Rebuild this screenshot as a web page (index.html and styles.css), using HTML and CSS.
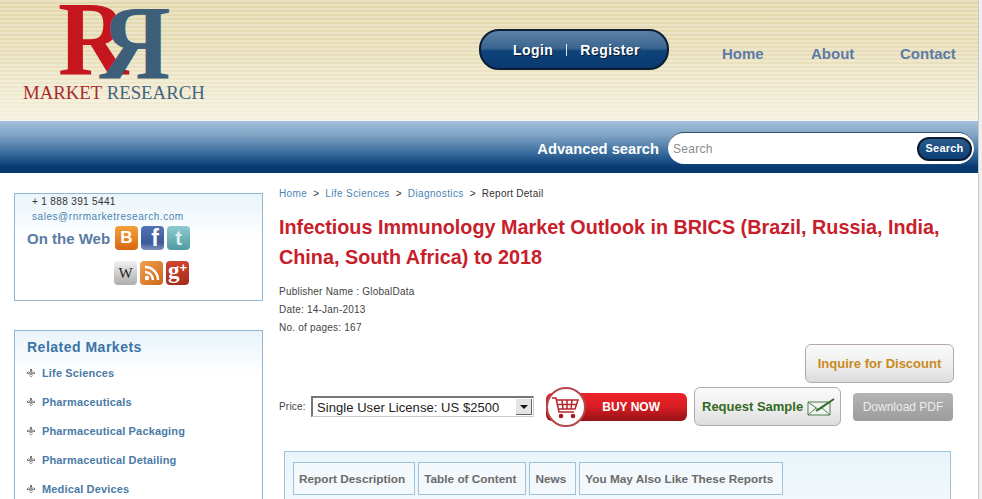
FILE: index.html
```html
<!DOCTYPE html>
<html lang="en">
<head>
    <meta charset="UTF-8">
    <title>Infectious Immunology Market Outlook in BRICS</title>
    <link rel="stylesheet" href="styles.css">
</head>
<body>
    <div class="page">
        <header class="header">
            <a class="logo" href="#">
                <span class="logo-r">R</span>
                <span class="logo-r-flip">R</span>
                <span class="logo-name"><span class="red">MARKET</span> RESEARCH</span>
            </a>
            <div class="login-pill"><a href="#">Login</a><i></i><a href="#">Register</a></div>
            <nav class="nav">
                <a href="#">Home</a>
                <a href="#">About</a>
                <a href="#">Contact</a>
            </nav>
        </header>
        <div class="search-band">
            <a class="adv-search" href="#">Advanced search</a>
            <div class="search-box">
                <span class="search-hint">Search</span>
                <span class="search-btn">Search</span>
            </div>
        </div>
        <div class="content">
            <aside class="sidebar">
                <div class="side-box contact-box">
                    <div class="phone">+ 1 888 391 5441</div>
                    <a class="mail" href="#">sales@rnrmarketresearch.com</a>
                    <div class="web-row">
                        <span class="web-title">On the Web</span>
                        <span class="soc blogger">B</span>
                        <span class="soc facebook">f</span>
                        <span class="soc twitter">t</span>
                    </div>
                    <div class="web-row second">
                        <span class="soc wiki">W</span>
                        <span class="soc rss">
                            <svg width="16" height="16" viewBox="0 0 16 16"><circle cx="3" cy="13" r="2.2" fill="#fff"/><path d="M1 7a8 8 0 0 1 8 8M1 2a13 13 0 0 1 13 13" fill="none" stroke="#fff" stroke-width="2.4"/></svg>
                        </span>
                        <span class="soc gplus">g<sup>+</sup></span>
                    </div>
                </div>
                <div class="side-box markets">
                    <h3>Related Markets</h3>
                    <ul>
                        <li><a href="#">Life Sciences</a></li>
                        <li><a href="#">Pharmaceuticals</a></li>
                        <li><a href="#">Pharmaceutical Packaging</a></li>
                        <li><a href="#">Pharmaceutical Detailing</a></li>
                        <li><a href="#">Medical Devices</a></li>
                    </ul>
                </div>
            </aside>
            <main class="main">
                <div class="crumbs">
                    <a href="#">Home</a><b>&gt;</b><a href="#">Life Sciences</a><b>&gt;</b><a href="#">Diagnostics</a><b>&gt;</b><span>Report Detail</span>
                </div>
                <h1>Infectious Immunology Market Outlook in BRICS (Brazil, Russia, India, China, South Africa) to 2018</h1>
                <div class="meta-list">
                    <div class="meta">Publisher Name : GlobalData</div>
                    <div class="meta">Date: 14-Jan-2013</div>
                    <div class="meta">No. of pages: 167</div>
                </div>
                <div class="discount-row">
                    <a class="soft-btn discount" href="#">Inquire for Discount</a>
                </div>
                <div class="buy-row">
                    <span class="price-label">Price:</span>
                    <div class="fake-select">
                        <span>Single User License: US $2500</span>
                        <i class="arrow"></i>
                    </div>
                    <a class="buy-btn" href="#">
                        <span class="cart">
                            <svg width="30" height="26" viewBox="0 0 30 26">
                                <path d="M1 4h4l3 14h15M6 6h21l-3 9H8M11 6l1 9M16 6v9M21 6l-1 9M7 10.500h19" fill="none" stroke="#b5262c" stroke-width="1.500"/>
                                <circle cx="10" cy="22" r="2.300" fill="#a3191f"/>
                                <circle cx="22" cy="22" r="2.300" fill="#a3191f"/>
                            </svg>
                        </span>
                        <span class="buy-text">BUY NOW</span>
                    </a>
                    <a class="soft-btn sample" href="#">Request Sample
                        <svg width="28" height="18" viewBox="0 0 28 18">
                            <path d="M1 4h22v13H1zM1 4l11 8 11-8M1 17l8-7M23 17l-8-7" fill="#f1f4ee" stroke="#4f7a4f" stroke-width="1"/>
                            <path d="M9 13L27 1" stroke="#2f6b2a" stroke-width="2"/>
                        </svg>
                    </a>
                    <a class="pdf-btn" href="#">Download PDF</a>
                </div>
                <div class="tabs-box">
                    <a class="tab" href="#">Report Description</a>
                    <a class="tab" href="#">Table of Content</a>
                    <a class="tab" href="#">News</a>
                    <a class="tab" href="#">You May Also Like These Reports</a>
                </div>
            </main>
        </div>
    </div>
</body>
</html>
```

FILE: styles.css
```css
html, body {
    margin: 0;
    padding: 0;
    height: 499px;
    overflow: hidden;
    background-color: #fff;
}
body {
    font-family: "Liberation Sans", Arial, sans-serif;
}
a {
    text-decoration: none;
}
.page {
    width: 978px;
    height: 499px;
    overflow: hidden;
    background-color: #fff;
    border-right: 1px solid #c9c9c9;
    box-shadow: 3px 0 0 #eeeeee;
}

/* header */
.header {
    display: flex;
    height: 121px;
    background-color: #f3eed6;
    background-image:
        repeating-linear-gradient(180deg, rgba(255, 255, 255, 0.28) 0, rgba(255, 255, 255, 0.28) 2px, rgba(255, 255, 255, 0) 2px, rgba(255, 255, 255, 0) 4px),
        linear-gradient(180deg, #e2d7ab 0%, #e6dcb5 40%, #f0ead0 80%, #f5f1dd 100%);
}
.logo {
    position: relative;
    display: block;
    width: 479px;
    flex: none;
    font-family: "Liberation Serif", serif;
}
.logo-r, .logo-r-flip {
    position: absolute;
    font-size: 106px;
    font-weight: bold;
    line-height: 72px;
}
.logo-r {
    left: 58px;
    top: 3px;
    color: #c4161c;
    transform: scaleX(0.92);
    transform-origin: left center;
}
.logo-r-flip {
    left: 97px;
    top: 7px;
    color: #3d5f7a;
    transform: scaleX(-0.92);
}
.logo-name {
    position: absolute;
    left: 23px;
    top: 82px;
    font-size: 18.800px;
    line-height: 22px;
    color: #44657f;
    white-space: nowrap;
}
.logo-name .red {
    color: #a92a2d;
}
.login-pill {
    display: flex;
    align-items: center;
    justify-content: center;
    gap: 13px;
    box-sizing: border-box;
    width: 190px;
    height: 41px;
    margin-top: 29px;
    padding-left: 5px;
    border: 2px solid #0b1c33;
    border-radius: 20px;
    background: linear-gradient(180deg, #5a80a6 0%, #3c6690 46%, #0e4379 54%, #0a3a70 100%);
}
.login-pill a {
    color: #fff;
    font-size: 14px;
    font-weight: bold;
    letter-spacing: 0.45px;
    text-shadow: 1px 1px 0 #0b1c33;
}
.login-pill i {
    width: 1px;
    height: 12px;
    background-color: #dfe6ee;
}
.nav {
    display: flex;
    margin-left: 53px;
    padding-top: 45px;
}
.nav a {
    color: #5c7aa6;
    font-size: 15px;
    font-weight: bold;
    line-height: 18px;
    height: 18px;
}
.nav a:nth-child(1) {
    width: 89px;
}
.nav a:nth-child(2) {
    width: 89px;
}

/* search band */
.search-band {
    display: flex;
    align-items: center;
    justify-content: flex-end;
    gap: 9px;
    box-sizing: border-box;
    height: 52px;
    padding: 2px 4px 0 0;
    border-top: 2px solid #a3bbdd;
    background: linear-gradient(180deg, #9dbcd6 0%, #7ea3c4 25%, #2f6396 65%, #083a72 88%, #08376c 100%);
}
.adv-search {
    color: #fff;
    font-size: 14.700px;
    font-weight: bold;
}
.search-box {
    display: flex;
    align-items: center;
    justify-content: space-between;
    box-sizing: border-box;
    width: 306px;
    height: 32px;
    margin-bottom: 2px;
    padding: 0 2px 0 5px;
    background-color: #fff;
    border-radius: 16px;
    border-top: 1px solid #35506b;
}
.search-hint {
    color: #8a8a8a;
    font-size: 12px;
    letter-spacing: 0.3px;
}
.search-btn {
    box-sizing: border-box;
    width: 55px;
    height: 24px;
    line-height: 19px;
    text-align: center;
    color: #fff;
    font-size: 11px;
    font-weight: bold;
    letter-spacing: 0.2px;
    border: 2px solid #0c1d33;
    border-radius: 12px;
    background: linear-gradient(180deg, #2c5a8c 0%, #0b3f76 100%);
}

/* two columns */
.content {
    display: flex;
    padding: 14px 0 0 14px;
}
.sidebar {
    flex: none;
    width: 249px;
    margin-top: 6px;
}
.side-box {
    box-sizing: border-box;
    border: 1px solid #8fb6d3;
    background: linear-gradient(180deg, #e9f4fa 0%, #fff 45px);
}
.contact-box {
    height: 108px;
    padding: 1px 0 0 12px;
    margin-bottom: 29px;
}
.phone {
    margin-left: 5px;
    color: #333;
    font-size: 10px;
    letter-spacing: 0.35px;
    line-height: 13px;
}
.mail {
    display: block;
    margin: 2px 0 0 5px;
    color: #4a83b3;
    font-size: 10px;
    letter-spacing: 0.55px;
    line-height: 13px;
}
.web-row {
    display: flex;
    align-items: center;
    gap: 3px;
    margin-top: 3px;
}
.web-row.second {
    margin: 11px 0 0 87px;
}
.web-title {
    width: 84px;
    margin-right: 1px;
    color: #5a7ba3;
    font-size: 15px;
    font-weight: bold;
    white-space: nowrap;
}
.soc {
    display: flex;
    align-items: center;
    justify-content: center;
    flex: none;
    width: 23px;
    height: 24px;
    border-radius: 4px;
    color: #fff;
    font-weight: bold;
}
.blogger {
    font-size: 17px;
    background: linear-gradient(180deg, #f5a13c, #d9660f);
}
.facebook {
    align-items: flex-end;
    justify-content: flex-end;
    padding-right: 5px;
    box-sizing: border-box;
    font-size: 23px;
    line-height: 23px;
    background: linear-gradient(180deg, #5273b5, #3c5a99 70%, #7f92ba);
}
.twitter {
    font-size: 20px;
    line-height: 22px;
    color: #dff3f7;
    background: linear-gradient(180deg, #8fc9cf, #4f9ba0);
}
.wiki {
    font-family: "Liberation Serif", serif;
    font-size: 15px;
    font-weight: normal;
    color: #222;
    background: linear-gradient(180deg, #f1f1f1, #adadad);
}
.rss {
    background: linear-gradient(135deg, #f0a050, #cf6617);
}
.gplus {
    align-items: flex-start;
    font-family: "Liberation Serif", serif;
    font-size: 23px;
    line-height: 20px;
    background: linear-gradient(180deg, #d0442f, #a62b1c);
}
.gplus sup {
    font-family: "Liberation Sans", Arial, sans-serif;
    font-size: 13px;
    line-height: 13px;
    vertical-align: baseline;
}
.markets {
    height: 200px;
    padding: 8px 0 0 12px;
}
.markets h3 {
    margin: 0 0 3px;
    color: #3b74a8;
    font-size: 14px;
    font-weight: bold;
    line-height: 17px;
    letter-spacing: 0.5px;
}
.markets ul {
    margin: 0;
    padding: 0;
    list-style: none;
}
.markets li {
    display: flex;
    align-items: center;
    height: 29px;
    margin-top: -1px;
    margin-bottom: 1px;
}
.markets li::before {
    content: "";
    box-sizing: border-box;
    width: 6px;
    height: 6px;
    margin: 0 8px 0 1px;
    border: 1px dotted #777;
    background-color: #999;
    background-clip: content-box;
    transform: rotate(45deg);
}
.markets a {
    color: #4a7aa6;
    font-size: 11px;
    font-weight: bold;
    letter-spacing: 0.15px;
}

/* main column */
.main {
    flex: none;
    width: 675px;
    margin-left: 16px;
}
.crumbs {
    display: flex;
    color: #333;
    font-size: 10px;
    line-height: 13px;
    letter-spacing: 0.25px;
}
.crumbs a {
    color: #4a83b3;
    letter-spacing: 0.38px;
}
.crumbs b {
    margin: 0 6px;
    font-weight: normal;
}
h1 {
    margin: 12px 0 0;
    width: 670px;
    color: #c8202b;
    font-size: 19.800px;
    font-weight: bold;
    line-height: 30px;
}
.meta-list {
    margin-top: 11px;
}
.meta {
    color: #444;
    font-size: 10px;
    line-height: 18px;
    letter-spacing: 0.22px;
}
.soft-btn {
    display: flex;
    align-items: center;
    box-sizing: border-box;
    height: 39px;
    border: 1px solid #b5a9a9;
    border-radius: 6px;
    background: linear-gradient(180deg, #fafafa 0%, #eeeeee 55%, #dcdcdc 100%);
    font-size: 13px;
    font-weight: bold;
}
.discount-row {
    display: flex;
    justify-content: flex-end;
    width: 675px;
    margin-top: 7px;
}
.discount {
    width: 149px;
    justify-content: center;
    color: #c98a1e;
}
.buy-row {
    display: flex;
    align-items: center;
    height: 39px;
    margin-top: 4px;
}
.price-label {
    width: 32px;
    color: #444;
    font-size: 10px;
    letter-spacing: 0.2px;
}
.fake-select {
    display: flex;
    align-items: center;
    justify-content: space-between;
    box-sizing: border-box;
    width: 223px;
    height: 21px;
    padding: 0 1px 0 4px;
    border: 1px solid #c9c9c9;
    border-top: 2px solid #777;
    border-left: 2px solid #777;
    color: #222;
    font-size: 13px;
    letter-spacing: 0.06px;
    background-color: #fff;
}
.arrow {
    position: relative;
    width: 15px;
    height: 15px;
    background-color: #e4e4e4;
    border-right: 1px solid #666;
    border-bottom: 1px solid #666;
}
.arrow::after {
    content: "";
    position: absolute;
    left: 4px;
    top: 6px;
    border: 4px solid transparent;
    border-top: 4px solid #111;
    border-bottom: 0;
}
.buy-btn {
    position: relative;
    display: flex;
    align-items: center;
    justify-content: flex-end;
    box-sizing: border-box;
    width: 141px;
    height: 28px;
    margin-left: 12px;
    padding-right: 27px;
    border-radius: 6px;
    background: linear-gradient(180deg, #ee2429 0%, #d71d22 50%, #931216 100%);
}
.cart {
    position: absolute;
    left: 0;
    top: -6px;
    display: flex;
    align-items: center;
    justify-content: center;
    box-sizing: border-box;
    width: 40px;
    height: 40px;
    border: 2px solid #b8474c;
    border-radius: 50%;
    background-color: #fff;
}
.buy-text {
    color: #fff;
    font-size: 12px;
    font-weight: bold;
}
.sample {
    gap: 4px;
    width: 147px;
    margin-left: 7px;
    padding-left: 7px;
    color: #33691e;
    white-space: nowrap;
}
.pdf-btn {
    width: 100px;
    height: 28px;
    margin-left: 12px;
    line-height: 28px;
    text-align: center;
    color: #ececec;
    font-size: 12px;
    border-radius: 4px;
    background: linear-gradient(180deg, #b4b4b4, #9c9c9c);
}
.tabs-box {
    display: flex;
    gap: 3px;
    box-sizing: border-box;
    width: 667px;
    height: 80px;
    margin: 25px 0 0 5px;
    padding: 10px 0 0 8px;
    border: 1px solid #9cc2dc;
    background: linear-gradient(180deg, #e9f4fa 0%, #f7fbfd 100%);
}
.tab {
    box-sizing: border-box;
    height: 33px;
    padding: 0 9px 0 5px;
    line-height: 32px;
    color: #6b6b6b;
    font-size: 11.800px;
    font-weight: bold;
    border: 1px solid #9cc2dc;
    background-color: #f2f8fb;
}
```
